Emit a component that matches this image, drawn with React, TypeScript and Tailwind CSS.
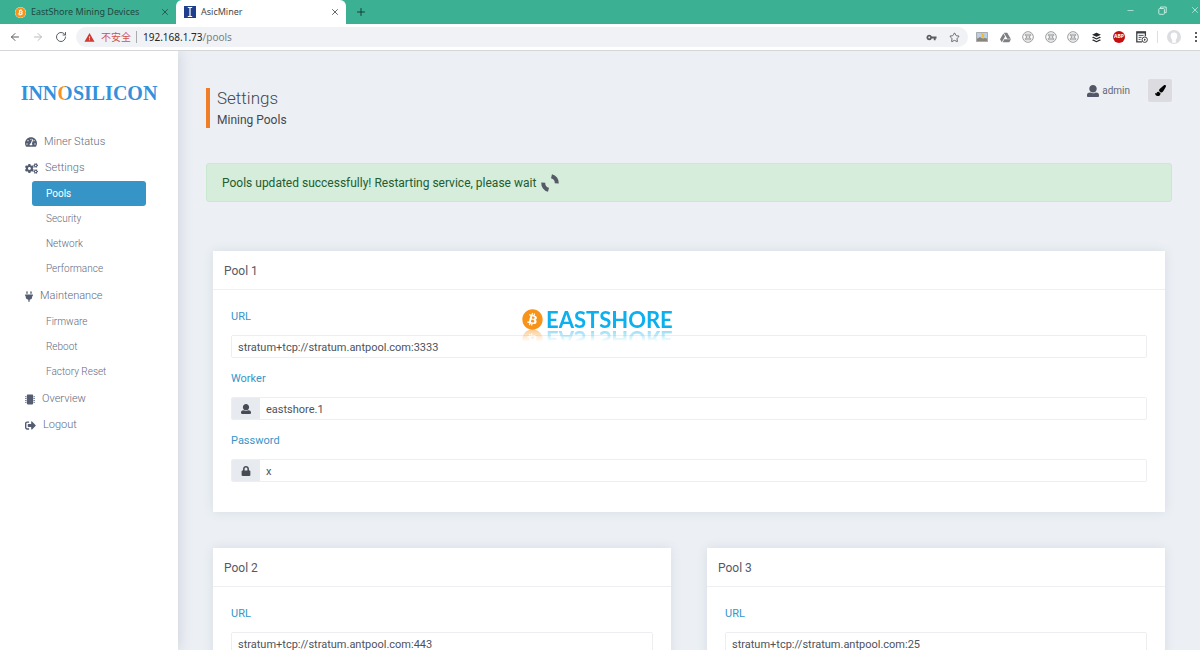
import React from "react";
import {
  FaBitcoin,
  FaBuffer,
  FaCogs,
  FaGoogleDrive,
  FaLock,
  FaMicrochip,
  FaPaintBrush,
  FaPlug,
  FaSignOutAlt,
  FaTachometerAlt,
} from "react-icons/fa";
import { MdVpnKey, MdWarning } from "react-icons/md";
import { ArrowLeft, ArrowRight, Minus, Plus, RotateCw, Star, X } from "lucide-react";

const UserIcon = ({ className }: { className?: string }) => (
  <svg viewBox="0 0 512 512" fill="currentColor" className={className}>
    <path d="M256 0c88.366 0 160 71.634 160 160s-71.634 160-160 160S96 248.366 96 160 167.634 0 256 0zm183.283 333.821l-71.313-17.828c-74.923 53.89-165.738 41.864-223.94 0l-71.313 17.828C29.981 344.505 0 382.903 0 426.955V464c0 26.51 21.49 48 48 48h416c26.51 0 48-21.49 48-48v-37.045c0-44.052-29.981-82.45-72.717-93.134z" />
  </svg>
);

const CommandIcon = () => (
  <svg viewBox="0 0 12 12" className="size-3 text-[#8b8d90]" fill="none" stroke="currentColor">
    <circle cx="6" cy="6" r="5.3" strokeWidth="0.9" />
    <path d="M3.2 3.2h5.6v1.6H3.2zM3.2 7.2h5.6v1.6H3.2zM4.6 4.8v2.4M7.4 4.8v2.4" strokeWidth="0.8" />
  </svg>
);

const PictureIcon = () => (
  <svg viewBox="0 0 12 10" className="h-[10px] w-3">
    <rect width="12" height="10" rx="0.6" fill="#a9adb0" />
    <rect x="1" y="1" width="10" height="5" fill="#b8d0e6" />
    <path d="M1 9V7l3-2 3 2 2-1 2 1v2z" fill="#8a8578" />
    <path d="M6 1l3 2.5-1.5.5L9 6 5.5 5l1-1.5L5 2.5z" fill="#f2b632" />
  </svg>
);

const NotesIcon = () => (
  <svg viewBox="0 0 12 12" className="size-3" fill="none" stroke="#3c4043">
    <path d="M6 10.8H.8V.8h8.6v4.4" strokeWidth="1.3" />
    <path d="M.8 1.6h8.6" strokeWidth="1.8" />
    <path d="M2.6 4.4h5M2.6 6.4h3M2.6 8.4h2" strokeWidth="0.9" />
    <circle cx="8.7" cy="8.7" r="2.7" strokeWidth="1" />
    <path d="M8 7.5l2 1.2-2 1.2z" fill="#3c4043" stroke="none" />
  </svg>
);

const BrowserTabs = () => (
  <div className="flex h-6 items-stretch bg-[#3cb093] text-[9px] text-[#1f4a40]">
    <button className="flex w-44 items-center gap-[5px] pl-[15px] pr-[6px]">
      <FaBitcoin className="size-[11px] rounded-full bg-white text-[#f7931a]" />
      <span className="grow text-left">EastShore Mining Devices</span>
      <X className="size-[10px]" />
    </button>
    <button className="flex w-[170px] items-center gap-[5px] rounded-t-md bg-white pl-2 pr-[6px] text-[#45494d]">
      <svg viewBox="0 0 12 12" className="size-3">
        <rect width="12" height="12" fill="#1f3f8c" />
        <path d="M3.8 1.5h4.4M6 1.5v9M3.8 10.5h4.4" stroke="#fff" strokeWidth="1.2" />
      </svg>
      <span className="grow text-left">AsicMiner</span>
      <X className="size-[10px]" />
    </button>
    <button aria-label="New tab" className="px-[9px] text-[#173f36]">
      <Plus className="size-3" />
    </button>
    <div className="ml-auto flex h-5 items-center gap-[23px] text-[#c3ebdf]">
      <button aria-label="Minimize">
        <Minus className="size-[9px]" />
      </button>
      <button aria-label="Restore">
        <svg viewBox="0 0 9 9" className="size-[9px]" fill="none" stroke="currentColor">
          <rect x="0.8" y="2.5" width="5.6" height="5.8" rx="0.8" />
          <path d="M2.5 2.3V1h5.7v5.6H6.6" />
        </svg>
      </button>
      <button aria-label="Close">
        <X className="size-[10px]" />
      </button>
    </div>
  </div>
);

const BrowserToolbar = () => (
  <div className="flex h-[27px] items-center border-b border-[#d5d6d9] bg-white text-[#5a5e63]">
    <div className="flex items-center gap-[11px] pl-[9px]">
      <button aria-label="Back">
        <ArrowLeft className="size-3" />
      </button>
      <button aria-label="Forward" className="text-[#b9bbbe]">
        <ArrowRight className="size-3" />
      </button>
      <button aria-label="Reload">
        <RotateCw className="size-3" />
      </button>
    </div>
    <div className="ml-[9px] flex h-5 grow items-center rounded-full bg-[#f1f2f5] pl-2 pr-2 text-[10px]">
      <MdWarning className="size-[11px] text-[#cf3a33]" />
      <span className="ml-[6px] font-['Liberation_Sans','Noto_Sans_CJK_SC',sans-serif] text-[#d0524b]">不安全</span>
      <span className="ml-[5px] h-3 w-px bg-[#a9abae]" />
      <span className="ml-[6px] grow text-[#222427]">
        192.168.1.73<span className="text-[#7c8084]">/pools</span>
      </span>
      <MdVpnKey className="size-[11px]" />
      <Star className="ml-3 size-[11px]" />
    </div>
    <div className="ml-[3px] grid w-[182px] grid-cols-8 place-items-center">
      <PictureIcon />
      <FaGoogleDrive className="size-[11px] text-[#7d7f82]" />
      <CommandIcon />
      <CommandIcon />
      <CommandIcon />
      <FaBuffer className="size-[11px] text-[#26292b]" />
      <span className="flex size-3 items-center justify-center rounded-full bg-[#c70d12] text-[5px] font-bold text-white">
        ABP
      </span>
      <NotesIcon />
    </div>
    <span className="ml-1 h-3 w-px bg-[#dddee0]" />
    <svg viewBox="0 0 14 14" className="ml-[9px] size-[14px]">
      <circle cx="7" cy="7" r="7" fill="#dcdde0" />
      <path d="M7 2.6a3.3 3.3 0 0 1 3.3 3.5c0 2-1 3.2-1.6 3.8l.2 2.8H5.1l.2-2.8C4.7 9.300 3.7 8.1 3.7 6.1A3.3 3.3 0 0 1 7 2.6z" fill="#fff" />
    </svg>
    <button aria-label="Menu" className="ml-[14px] mr-[3px]">
      <svg viewBox="0 0 2 10" className="h-[10px] w-[2px]" fill="currentColor">
        <rect width="2" height="2" />
        <rect y="4" width="2" height="2" />
        <rect y="8" width="2" height="2" />
      </svg>
    </button>
  </div>
);

const menu = [
  { label: "Miner Status", icon: <FaTachometerAlt className="size-3" />, items: [] },
  {
    label: "Settings",
    icon: <FaCogs className="h-[11px] w-[13px]" />,
    items: ["Pools", "Security", "Network", "Performance"],
  },
  {
    label: "Maintenance",
    icon: <FaPlug className="h-[11px] w-2" />,
    items: ["Firmware", "Reboot", "Factory Reset"],
  },
  { label: "Overview", icon: <FaMicrochip className="h-[11px] w-[10px]" />, items: [] },
  { label: "Logout", icon: <FaSignOutAlt className="size-[11px]" />, items: [] },
];

const Sidebar = () => (
  <aside className="z-10 w-[178px] shrink-0 bg-white shadow-[0_0_14px_rgba(60,70,100,0.2)]">
    <div className="pt-[30px] text-center font-['Liberation_Serif',serif] text-[20px] font-bold leading-6 text-[#3490dc]">
      INN
      <span className="bg-linear-to-r from-[#f7931e] from-50% to-[#3490dc] to-50% bg-clip-text text-transparent">
        O
      </span>
      SILICON
    </div>
    <nav className="mt-[24px] text-[11px] font-light text-[#636a7c]">
      {menu.map(({ label, icon, items }) => (
        <div key={label}>
          <a href="#" className="flex h-[26px] items-center gap-[7px] pl-[25px]">
            <span className="text-[#535c70]">{icon}</span>
            {label}
          </a>
          {items.length > 0 && (
            <ul className="pb-[2px] pl-8 pr-8 text-[10px]">
              {items.map((item) => (
                <li key={item}>
                  <a
                    href="#"
                    className={`flex h-[25px] items-center pl-[14px] ${
                      item === "Pools" ? "rounded-[3px] bg-[#3794c7] font-normal text-white" : ""
                    }`}
                  >
                    {item}
                  </a>
                </li>
              ))}
            </ul>
          )}
        </div>
      ))}
    </nav>
  </aside>
);

const Field = ({ id, label, value, icon }: { id: string; label: string; value: string; icon?: React.ReactNode }) => (
  <div>
    <label htmlFor={id} className="block text-[11px] leading-4 text-[#3695c9]">
      {label}
    </label>
    <div className="mt-[10px] flex h-[23px] overflow-hidden rounded-[2px] border border-[#eceef2]">
      {icon && (
        <span className="flex w-7 shrink-0 items-center justify-center bg-[#e7eaef] text-[#464b55]">{icon}</span>
      )}
      <input
        id={id}
        defaultValue={value}
        className="w-full min-w-0 bg-white px-[6px] pt-[2px] text-[11px] leading-4 text-[#4d525c] outline-none"
      />
    </div>
  </div>
);

const PoolCard = ({ number, url, worker }: { number: number; url: string; worker: string }) => (
  <section className="bg-white shadow-[0_0_10px_rgba(70,90,110,0.12)]">
    <h2 className="border-b border-[#edeff3] px-[11px] pt-[2px] text-[12px] leading-9 text-[#555965]">
      Pool {number}
    </h2>
    <div className="flex flex-col gap-[13px] pb-[30px] pl-[18px] pr-[18px] pt-[19px]">
      <Field id={`url-${number}`} label="URL" value={url} />
      <Field id={`worker-${number}`} label="Worker" value={worker} icon={<UserIcon className="size-[10px]" />} />
      <Field id={`password-${number}`} label="Password" value="x" icon={<FaLock className="size-[10px]" />} />
    </div>
  </section>
);

// Brand mark that floats over the page
const Watermark = () => (
  <div className="pointer-events-none absolute left-[522px] top-[309px] flex h-[21px] items-center gap-[3px] [-webkit-box-reflect:below_-1px_linear-gradient(to_top,rgba(0,0,0,0.5),transparent_60%)]">
    <FaBitcoin className="size-[21px] text-[#f7931a]" />
    <span className="font-['Lato',sans-serif] text-[22px] font-bold leading-[21px] text-[#0cb0ee]">EASTSHORE</span>
  </div>
);

export default function App() {
  return (
    <div className="relative flex h-screen flex-col overflow-hidden bg-[#ecf0f5] font-['Roboto',sans-serif]">
      <header className="z-20 shrink-0 font-['Noto_Sans',sans-serif]">
        <BrowserTabs />
        <BrowserToolbar />
      </header>
      <div className="flex min-h-0 grow">
        <Sidebar />
        <main className="min-w-0 grow px-7 pt-[28px]">
          <div className="flex items-start justify-between">
            <div className="mt-[9px] border-l-4 border-[#f07d27] pl-[7px] text-[#45474c]">
              <h1 className="text-[17px] font-light leading-5">Settings</h1>
              <p className="pt-1 text-[12px] leading-4">Mining Pools</p>
            </div>
            <div className="flex items-center gap-[18px]">
              <span className="flex items-center gap-[3px] text-[10px] text-[#666a73]">
                <UserIcon className="size-3 text-[#525865]" />
                admin
              </span>
              <button
                aria-label="Theme"
                className="flex h-[23px] w-6 items-center justify-center rounded-[2px] bg-[#dcdbe0] text-black"
              >
                <FaPaintBrush className="size-[11px]" />
              </button>
            </div>
          </div>
          <div
            role="status"
            className="mt-[35px] flex h-[39px] items-center gap-[5px] rounded-[3px] border border-[#c9e8cf] bg-[#d5edda] px-[15px] text-[12px] text-[#235c30]"
          >
            Pools updated successfully! Restarting service, please wait
            <svg viewBox="0 0 18 18" className="size-[18px]" fill="none" stroke="#545b66" strokeWidth="4">
              <path d="M10.5 2.2A7 7 0 0 1 15.8 9.300M7.5 15.8A7 7 0 0 1 2.2 8.7" />
            </svg>
          </div>
          <div className="mx-[7px] mt-[49px] grid grid-cols-2 gap-9">
            <div className="col-span-2">
              <PoolCard number={1} url="stratum+tcp://stratum.antpool.com:3333" worker="eastshore.1" />
            </div>
            <PoolCard number={2} url="stratum+tcp://stratum.antpool.com:443" worker="eastshore.1" />
            <PoolCard number={3} url="stratum+tcp://stratum.antpool.com:25" worker="eastshore.1" />
          </div>
        </main>
      </div>
      <Watermark />
    </div>
  );
}
